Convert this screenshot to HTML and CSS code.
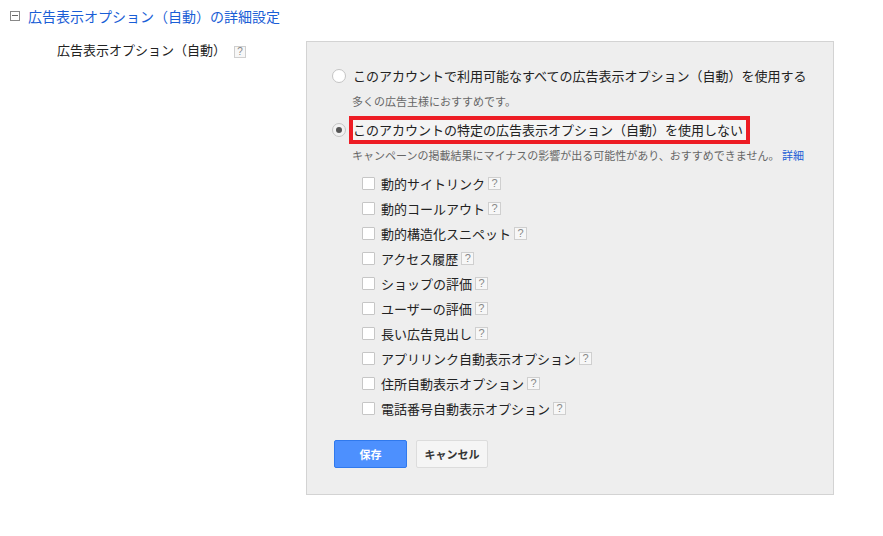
FILE: index.html
```html
<!DOCTYPE html>
<html>
  <head>
    <meta charset="utf-8">
    <title>広告表示オプション（自動）の詳細設定</title>
    <link rel="stylesheet" href="styles.css">
  </head>
  <body>
    <div class="page">
      <div class="section-title">
        <span class="toggle"></span>
        <span>広告表示オプション（自動）の詳細設定</span>
      </div>
      <div class="setting">
        <div class="setting-label">広告表示オプション（自動）<span class="help">?</span></div>
        <div class="panel">
          <label class="option">
            <input type="radio" name="mode">
            <span>このアカウントで利用可能なすべての広告表示オプション（自動）を使用する</span>
          </label>
          <div class="hint">多くの広告主様におすすめです。</div>
          <label class="option second">
            <input type="radio" name="mode" checked>
            <span class="marked">このアカウントの特定の広告表示オプション（自動）を使用しない</span>
          </label>
          <div class="hint">キャンペーンの掲載結果にマイナスの影響が出る可能性があり、おすすめできません。 <a href="#">詳細</a></div>
          <ul class="types">
            <li><label><input type="checkbox">動的サイトリンク</label><span class="help">?</span></li>
            <li><label><input type="checkbox">動的コールアウト</label><span class="help">?</span></li>
            <li><label><input type="checkbox">動的構造化スニペット</label><span class="help">?</span></li>
            <li><label><input type="checkbox">アクセス履歴</label><span class="help">?</span></li>
            <li><label><input type="checkbox">ショップの評価</label><span class="help">?</span></li>
            <li><label><input type="checkbox">ユーザーの評価</label><span class="help">?</span></li>
            <li><label><input type="checkbox">長い広告見出し</label><span class="help">?</span></li>
            <li><label><input type="checkbox">アプリリンク自動表示オプション</label><span class="help">?</span></li>
            <li><label><input type="checkbox">住所自動表示オプション</label><span class="help">?</span></li>
            <li><label><input type="checkbox">電話番号自動表示オプション</label><span class="help">?</span></li>
          </ul>
          <div class="actions">
            <button class="btn primary">保存</button>
            <button class="btn">キャンセル</button>
          </div>
        </div>
      </div>
    </div>
  </body>
</html>
```

FILE: styles.css
```css
* {
  box-sizing: border-box;
}

body {
  margin: 0;
  padding: 0;
  background-color: #fff;
  color: #222;
  font-family: "Noto Sans CJK JP", "Noto Sans", sans-serif;
  font-size: 13px;
}

.page {
  padding: 6px 0 0 10px;
}

.section-title {
  display: flex;
  align-items: center;
  height: 20px;
  font-size: 14px;
  line-height: 20px;
  color: #1a5ed6;
}

.toggle {
  position: relative;
  width: 10px;
  height: 10px;
  margin-right: 8px;
  border: 1px solid #888;
  background-color: #fff;
}

.toggle::after {
  content: "";
  position: absolute;
  left: 1px;
  right: 1px;
  top: 3px;
  height: 1px;
  background-color: #666;
}

.setting {
  display: flex;
  align-items: flex-start;
  margin-top: 14px;
}

.setting-label {
  display: flex;
  align-items: center;
  width: 296px;
  padding-left: 47px;
  line-height: 20px;
}

.help {
  display: inline-flex;
  align-items: center;
  justify-content: center;
  width: 13px;
  height: 13px;
  margin-left: 3px;
  border: 1px solid #cfcfcf;
  background-color: #f7f7f7;
  color: #888;
  font-family: "Liberation Sans", sans-serif;
  font-size: 11px;
  line-height: 1;
}

.setting-label .help {
  width: 12px;
  height: 12px;
  margin-left: 8px;
  margin-top: 3px;
  font-size: 10px;
}

.panel {
  width: 528px;
  margin-top: 1px;
  padding: 24px 0 26px 25px;
  background-color: #eeeeee;
  border: 1px solid #d3d3d3;
}

.option {
  display: flex;
  align-items: center;
  height: 20px;
  line-height: 20px;
}

.option.second {
  margin-top: 11px;
}

.option input {
  appearance: none;
  position: relative;
  width: 14px;
  height: 14px;
  margin: 0 7px 0 0;
  border: 1px solid #c4c4c4;
  border-radius: 50%;
  background-color: #fff;
}

.option input:checked {
  background-color: #f2f2f2;
}

.option input:checked::after {
  content: "";
  position: absolute;
  left: 3px;
  top: 3px;
  width: 6px;
  height: 6px;
  border-radius: 50%;
  background-color: #555;
}

.marked {
  outline: 4px solid #ed1c24;
  padding-right: 3px;
  background-color: #f4f4f4;
}

.hint {
  margin: 7px 0 0 20px;
  font-size: 11px;
  line-height: 16px;
  color: #666;
}

.hint a {
  color: #1a5ed6;
  text-decoration: none;
}

.types {
  list-style: none;
  margin: 8px 0 0 30px;
  padding: 0;
}

.types li {
  display: flex;
  align-items: center;
  height: 25px;
}

.types label {
  display: flex;
  align-items: center;
}

.types input {
  appearance: none;
  width: 13px;
  height: 13px;
  margin: 0 6px 0 0;
  border: 1px solid #c6c6c6;
  border-radius: 1px;
  background-color: #fff;
}

.actions {
  display: flex;
  gap: 9px;
  margin: 19px 0 0 2px;
}

.btn {
  width: 72px;
  height: 28px;
  padding: 0;
  border: 1px solid #dcdcdc;
  border-radius: 2px;
  background-color: #f5f5f5;
  color: #333;
  font-family: "Noto Sans CJK JP", sans-serif;
  font-size: 11px;
  font-weight: bold;
}

.btn.primary {
  width: 73px;
  border-color: #3079ed;
  background-color: #4d90fe;
  color: #fff;
}
```
